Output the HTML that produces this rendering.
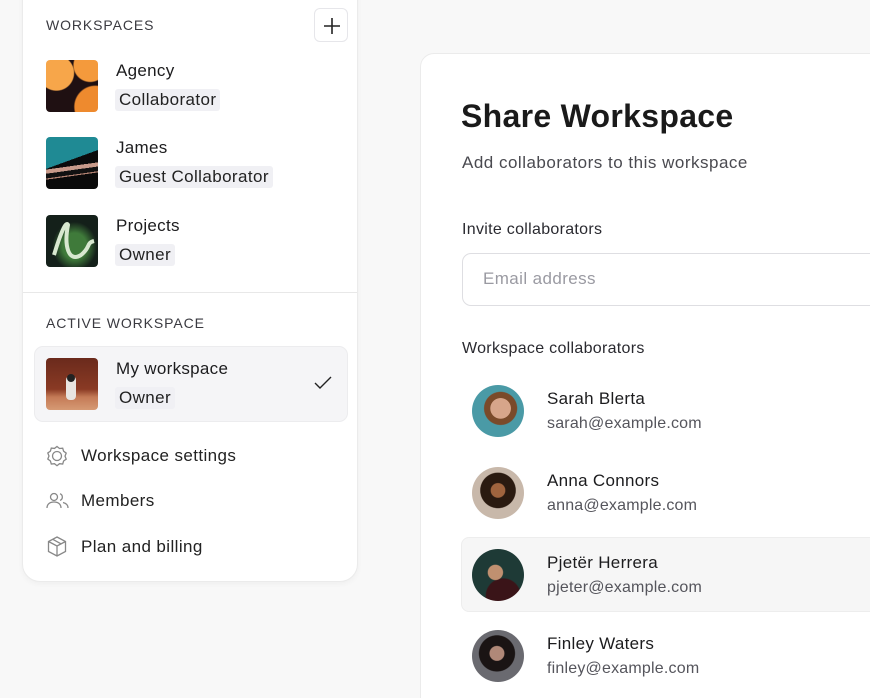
<!DOCTYPE html>
<html><head><meta charset="utf-8"><style>
*{margin:0;padding:0;box-sizing:border-box}
html,body{width:870px;height:698px;overflow:hidden}
body{background:#f8f8f8;font-family:"Liberation Sans",sans-serif;color:#1c1c1e;position:relative}
.a{position:absolute}
.card{left:22px;top:-20px;width:336px;height:602px;background:#fff;border:1px solid #ebebeb;border-radius:18px;box-shadow:0 2px 6px rgba(0,0,0,.04)}
.sec{font-size:14px;letter-spacing:.9px;color:#3a3a40}
.th{width:52px;height:52px;border-radius:4px;overflow:hidden}
.nm{font-size:17px;color:#1c1c1e;letter-spacing:.3px}
.bd{font-size:17px;background:#f0f0f4;border-radius:3px;padding:1px 4px;color:#222;letter-spacing:.4px}
.mi{font-size:17px;color:#222;letter-spacing:.4px}
.rc{left:420px;top:53px;width:480px;height:660px;background:#fff;border:1px solid #ebebeb;border-radius:14px}
.av{width:52px;height:52px;border-radius:50%;overflow:hidden}
.pn{font-size:17px;color:#1c1c1e;letter-spacing:.3px}
.pe{font-size:16px;color:#55555c;letter-spacing:.2px}
</style></head><body>
<div class="a card"></div>
<div class="a sec" style="left:46px;top:17px">WORKSPACES</div>
<div class="a" style="left:314px;top:8px;width:34px;height:34px;border:1px solid #e6e6ea;border-radius:6px;background:#fff"><svg width="34" height="34" viewBox="0 0 34 34"><path d="M17 9v16M9 17h16" stroke="#222" stroke-width="1.6"/></svg></div>

<div class="a th" style="left:46px;top:60px;background:radial-gradient(circle at 20% 25%,#f7a64a 0 30%,transparent 32%),radial-gradient(circle at 85% 10%,#f49a3c 0 25%,transparent 27%),radial-gradient(circle at 95% 90%,#ee8a2e 0 30%,transparent 32%),#1f1012"></div>
<div class="a nm" style="left:116px;top:61px">Agency</div>
<div class="a bd" style="left:115px;top:89px">Collaborator</div>

<div class="a th" style="left:46px;top:137px;background:linear-gradient(160deg,#1f8a94 0 45%,transparent 45%),linear-gradient(172deg,transparent 0 55%,#c89a8a 55% 62%,#111 62% 70%,#b08070 70% 72%,#0a0a0a 72%),#0b0b0b"></div>
<div class="a nm" style="left:116px;top:138px">James</div>
<div class="a bd" style="left:115px;top:166px">Guest Collaborator</div>

<div class="a th" style="left:46px;top:215px;background:radial-gradient(ellipse at 55% 60%,#3f7a3a 0 30%,transparent 55%),#14201a"><svg width="52" height="52"><path d="M8 40C14 20 20 5 22 10 18 30 22 48 35 40 45 32 40 28 48 26" stroke="#d8e8d0" stroke-width="4" fill="none"/></svg></div>
<div class="a nm" style="left:116px;top:216px">Projects</div>
<div class="a bd" style="left:115px;top:244px">Owner</div>

<div class="a" style="left:23px;top:292px;width:334px;height:1px;background:#e8e8e8"></div>
<div class="a sec" style="left:46px;top:315px">ACTIVE WORKSPACE</div>
<div class="a" style="left:34px;top:346px;width:314px;height:76px;background:#f5f5f7;border:1px solid #ececee;border-radius:9px"></div>
<div class="a th" style="left:46px;top:358px;background:linear-gradient(180deg,#6a2a1c 0,#8a3a24 60%,#c47a56 75%,#d69a74 100%)"><div class="a" style="left:20px;top:18px;width:10px;height:24px;background:#e8e4e0;border-radius:4px"></div><div class="a" style="left:21px;top:16px;width:8px;height:8px;background:#222;border-radius:50%"></div></div>
<div class="a nm" style="left:116px;top:359px">My workspace</div>
<div class="a bd" style="left:115px;top:387px">Owner</div>
<svg class="a" style="left:313px;top:375px" width="20" height="16"><path d="M2 8l5 5L18 2" stroke="#222" stroke-width="1.4" fill="none"/></svg>

<svg class="a" style="left:46px;top:445px" width="22" height="22" viewBox="0 0 22 22" fill="none" stroke="#888" stroke-width="1.3"><path d="M11 1.5l2.5 2 3.2-.3.9 3 2.6 1.9-1.2 3 1.2 3-2.6 1.9-.9 3-3.2-.3-2.5 2-2.5-2-3.2.3-.9-3L1.8 14l1.2-3-1.2-3 2.6-1.9.9-3 3.2.3z"/><circle cx="11" cy="11" r="4.5"/></svg>
<div class="a mi" style="left:81px;top:446px">Workspace settings</div>
<svg class="a" style="left:46px;top:492px" width="24" height="18" viewBox="0 0 24 18" fill="none" stroke="#888" stroke-width="1.3"><circle cx="8" cy="5" r="3.5"/><path d="M1 16c0-4 3-6 7-6s7 2 7 6"/><path d="M14 1.8a3.5 3.5 0 010 6.6M17 10.5c3 .7 5 2.5 5 5.5"/></svg>
<div class="a mi" style="left:81px;top:491px">Members</div>
<svg class="a" style="left:47px;top:536px" width="20" height="22" viewBox="0 0 20 22" fill="none" stroke="#888" stroke-width="1.3"><path d="M10 1l8.5 4.5v10L10 20 1.5 15.5v-10zM1.5 5.5L10 10l8.5-4.5M10 10v10M5.5 3.2l8.5 4.6"/></svg>
<div class="a mi" style="left:81px;top:537px">Plan and billing</div>

<div class="a rc"></div>
<div class="a" style="left:461px;top:98px;font-size:32px;font-weight:bold;color:#1a1a1a;letter-spacing:.3px">Share Workspace</div>
<div class="a" style="left:462px;top:153px;font-size:17px;color:#4a4a50;letter-spacing:.5px">Add collaborators to this workspace</div>
<div class="a" style="left:462px;top:221px;font-size:16px;color:#2a2a30;letter-spacing:.3px">Invite collaborators</div>
<div class="a" style="left:462px;top:253px;width:440px;height:53px;border:1px solid #dedee2;border-radius:9px"></div>
<div class="a" style="left:483px;top:269px;font-size:17px;color:#9a9aa2;letter-spacing:.4px">Email address</div>
<div class="a" style="left:462px;top:340px;font-size:16px;color:#2a2a30;letter-spacing:.3px">Workspace collaborators</div>

<div class="a" style="left:461px;top:537px;width:420px;height:75px;background:#f6f6f6;border:1px solid #ededed;border-radius:8px"></div>

<div class="a av" style="left:472px;top:385px;background:radial-gradient(circle at 55% 45%,#d7a58a 0 25%,#7a4a2a 26% 40%,transparent 42%),#4a9aa6"></div>
<div class="a pn" style="left:547px;top:389px">Sarah Blerta</div>
<div class="a pe" style="left:547px;top:415px">sarah@example.com</div>

<div class="a av" style="left:472px;top:467px;background:radial-gradient(circle at 50% 45%,#a0643e 0 18%,#2a1a10 20% 45%,transparent 47%),#c8b8aa"></div>
<div class="a pn" style="left:547px;top:471px">Anna Connors</div>
<div class="a pe" style="left:547px;top:497px">anna@example.com</div>

<div class="a av" style="left:472px;top:549px;background:radial-gradient(circle at 45% 45%,#c09070 0 18%,transparent 20%),radial-gradient(circle at 60% 90%,#3a1418 0 30%,transparent 32%),#1e3a36"></div>
<div class="a pn" style="left:547px;top:553px">Pjetër Herrera</div>
<div class="a pe" style="left:547px;top:579px">pjeter@example.com</div>

<div class="a av" style="left:472px;top:630px;background:radial-gradient(circle at 48% 45%,#b08878 0 18%,#1a1414 20% 45%,transparent 47%),#6a6a70"></div>
<div class="a pn" style="left:547px;top:634px">Finley Waters</div>
<div class="a pe" style="left:547px;top:660px">finley@example.com</div>
</body></html>
